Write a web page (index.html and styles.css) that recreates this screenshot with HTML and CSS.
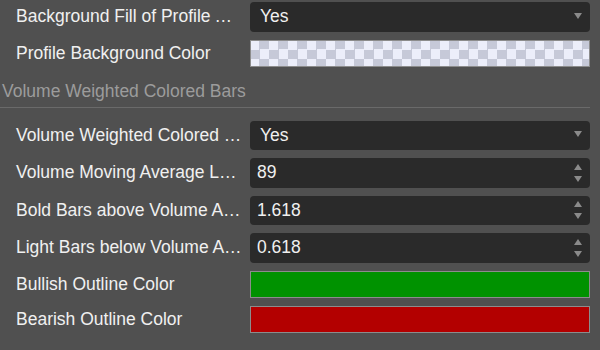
FILE: index.html
```html
<!DOCTYPE html>
<html lang="en">
<head>
    <meta charset="UTF-8">
    <meta name="viewport" content="width=device-width, initial-scale=1.0">
    <title>Indicator Settings</title>
    <link rel="stylesheet" href="styles.css">
</head>
<body>
    <div class="settings">
        <div class="row">
            <div class="label">Background Fill of Profile Area</div>
            <div class="control select">
                <span class="value">Yes</span>
                <svg class="caret" width="8" height="6" viewBox="0 0 8 6"><path d="M0 0H8L4 6Z"/></svg>
            </div>
        </div>
        <div class="row">
            <div class="label">Profile Background Color</div>
            <div class="swatch checker"></div>
        </div>

        <div class="section">Volume Weighted Colored Bars</div>

        <div class="row">
            <div class="label">Volume Weighted Colored Bars</div>
            <div class="control select">
                <span class="value">Yes</span>
                <svg class="caret" width="8" height="6" viewBox="0 0 8 6"><path d="M0 0H8L4 6Z"/></svg>
            </div>
        </div>
        <div class="row">
            <div class="label">Volume Moving Average Length</div>
            <div class="control number">
                <span class="value">89</span>
                <span class="spin">
                    <svg width="8" height="6" viewBox="0 0 8 6"><path d="M0 6H8L4 0Z"/></svg>
                    <svg width="8" height="6" viewBox="0 0 8 6"><path d="M0 0H8L4 6Z"/></svg>
                </span>
            </div>
        </div>
        <div class="row">
            <div class="label">Bold Bars above Volume Average</div>
            <div class="control number">
                <span class="value">1.618</span>
                <span class="spin">
                    <svg width="8" height="6" viewBox="0 0 8 6"><path d="M0 6H8L4 0Z"/></svg>
                    <svg width="8" height="6" viewBox="0 0 8 6"><path d="M0 0H8L4 6Z"/></svg>
                </span>
            </div>
        </div>
        <div class="row">
            <div class="label">Light Bars below Volume Average</div>
            <div class="control number">
                <span class="value">0.618</span>
                <span class="spin">
                    <svg width="8" height="6" viewBox="0 0 8 6"><path d="M0 6H8L4 0Z"/></svg>
                    <svg width="8" height="6" viewBox="0 0 8 6"><path d="M0 0H8L4 6Z"/></svg>
                </span>
            </div>
        </div>
        <div class="row">
            <div class="label">Bullish Outline Color</div>
            <div class="swatch green"></div>
        </div>
        <div class="row">
            <div class="label">Bearish Outline Color</div>
            <div class="swatch red"></div>
        </div>
    </div>
</body>
</html>
```

FILE: styles.css
```css
html, body {
    margin: 0;
    background-color: #505050;
    font-family: "Liberation Sans", Arial, sans-serif;
    font-size: 17.5px;
    color: #f0f0f0;
}

.settings {
    width: 590px;
    padding-top: 2px;
}

.row {
    display: flex;
    align-items: center;
    margin-bottom: 8px;
}

.label {
    flex: 0 0 227px;
    padding: 0 7px 0 16px;
    white-space: nowrap;
    overflow: hidden;
    text-overflow: ellipsis;
}

.control {
    flex: 1;
    height: 29.5px;
    display: flex;
    align-items: center;
    justify-content: space-between;
    background-color: #2a2a2a;
    border-radius: 4px;
    box-sizing: border-box;
}

.select {
    padding: 0 8px 0 10px;
}

.number {
    padding: 0 8px 0 7px;
}

.caret {
    fill: #8a8a8a;
    margin-top: -2px;
}

.spin {
    display: flex;
    flex-direction: column;
    gap: 6px;
}

.spin svg {
    display: block;
    fill: #8a8a8a;
}

.swatch {
    flex: 1;
    height: 27px;
    border: 1px solid #8c8c8c;
    box-sizing: border-box;
}

.checker {
    background-color: #eceefa;
    background-image: conic-gradient(#c6c9d8 0 25%, transparent 0 50%, #c6c9d8 0 75%, transparent 0);
    background-size: 19px 19px;
    background-position: -1px -1px;
}

.green {
    background-color: #009200;
}

.red {
    background-color: #b30000;
}

.section {
    margin: 13px 0 13px;
    padding: 0 0 5px 2px;
    line-height: 22px;
    color: #9c9c9c;
    border-bottom: 1px solid #6a6a6a;
}
```
